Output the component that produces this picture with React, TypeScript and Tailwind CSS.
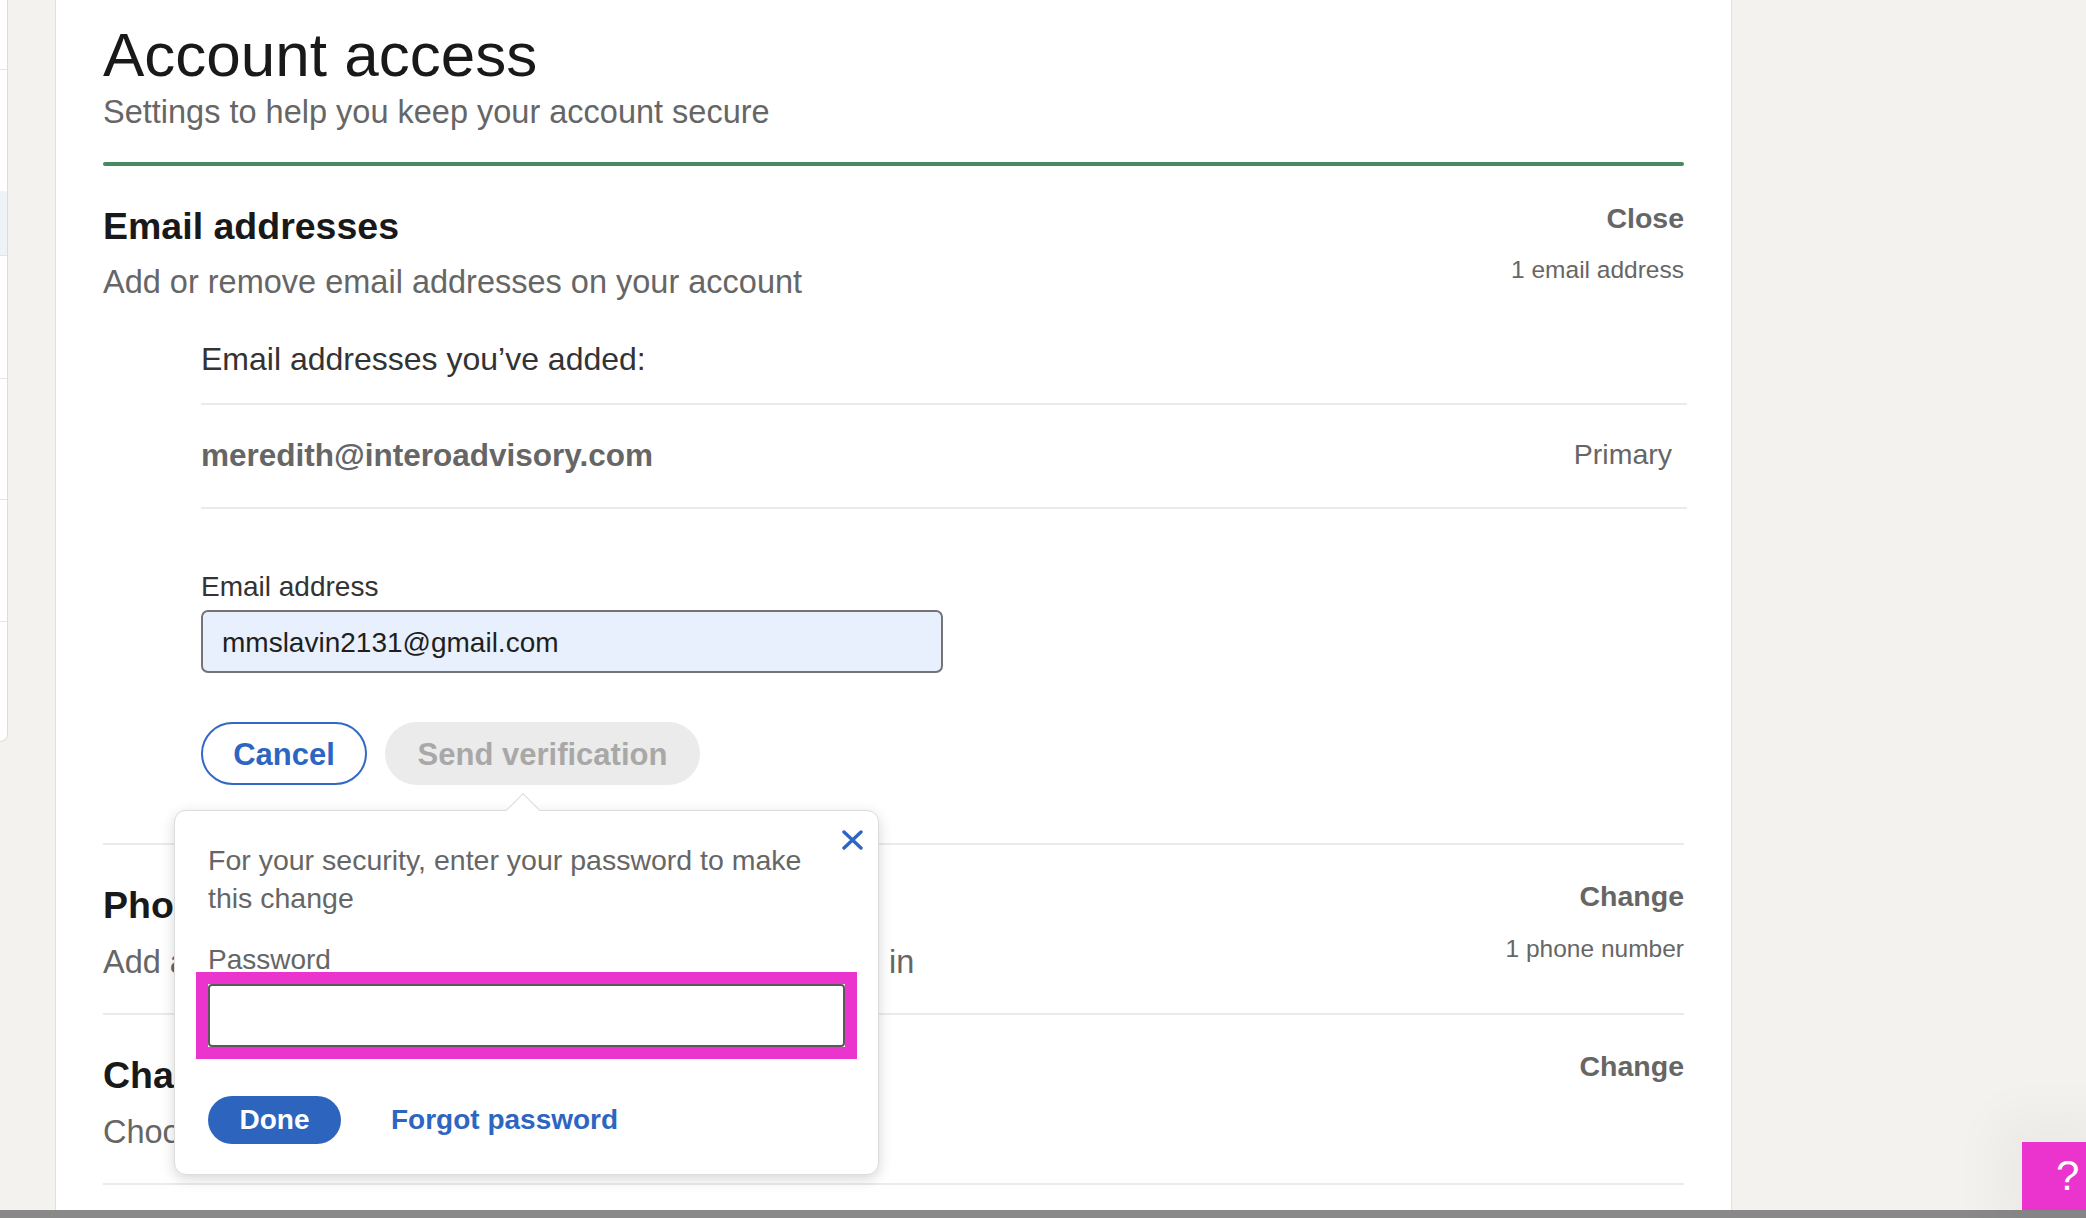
import React from 'react';

const sections = [
  {
    title: 'Phone numbers',
    desc: 'Add a phone number in case you have trouble signing in',
    action: 'Change',
    meta: '1 phone number',
  },
  {
    title: 'Change password',
    desc: 'Choose a unique password to protect your account',
    action: 'Change',
    meta: '',
  },
];

const Sidebar: React.FC = () => (
  <div className="w-[8px] h-[742px] shrink-0 bg-white border-r border-b border-[#dcdcdc] rounded-br-[8px] flex flex-col overflow-hidden">
    <div className="h-[70px] border-b border-[#e4e4e4]" />
    <div className="h-[121px]" />
    <div className="h-[65px] bg-[#eef3f8] border-b border-[#e4e4e4]" />
    <div className="h-[123px] border-b border-[#e4e4e4]" />
    <div className="h-[121px] border-b border-[#e4e4e4]" />
    <div className="h-[122px] border-b border-[#e4e4e4]" />
  </div>
);

const PasswordPopover: React.FC = () => (
  <div className="absolute left-[-27px] top-[88px] z-20 w-[705px] bg-white border border-[#dcdcdc] rounded-[12px] shadow-[0_4px_14px_rgba(0,0,0,0.16)] pt-[30px] px-[33px] pb-[30px]">
    {/* caret */}
    <div className="absolute left-[336px] top-[-13px] w-[24px] h-[24px] bg-white border-l border-t border-[#dcdcdc] rotate-45" />
    <button className="absolute top-[18px] right-[15px] w-[22px] h-[22px] flex items-center justify-center">
      <svg width="21" height="20" viewBox="0 0 21 20" fill="none">
        <path d="M2 2L19 18M19 2L2 18" stroke="#2d66c2" strokeWidth="3.4" strokeLinecap="round" />
      </svg>
    </button>
    <p className="pr-[10px] text-[28.5px] leading-[38px] text-[#666]">
      For your security, enter your password to make this change
    </p>
    <div className="mt-[30px] text-[28px] leading-[26px] text-[#666]">Password</div>
    <div className="mt-[-1px] -mx-[12px] border-[12px] border-[#ea34cd]">
      <input
        type="password"
        className="block w-full h-[63px] rounded-[4px] border-2 border-[#595959] bg-white outline-none"
      />
    </div>
    <div className="mt-[37px] flex items-center gap-[50px]">
      <button className="h-[48px] w-[133px] rounded-full bg-[#2d64bd] text-white text-[28px] font-bold">
        Done
      </button>
      <button className="text-[28px] font-bold text-[#2d66c2]">Forgot password</button>
    </div>
  </div>
);

export default function App() {
  return (
    <div className="relative w-[2086px] h-[1218px] overflow-hidden bg-[#f3f2ef] flex flex-col font-['Liberation_Sans',Arial,sans-serif]">
      <div className="flex-1 min-h-0 flex items-start">
        <Sidebar />
        <main className="ml-[47px] w-[1677px] h-full shrink-0 bg-white border-x border-[#e0dfdc] px-[47px] pt-[20px]">
          <h1 className="text-[62px] leading-[70px] text-[#191919]">Account access</h1>
          <p className="mt-[2px] text-[32.5px] leading-[40px] text-[#666]">
            Settings to help you keep your account secure
          </p>
          <div className="mt-[30px] h-[4px] rounded-full bg-[#478a62]" />

          {/* Email addresses, expanded */}
          <section className="pt-[38px] pb-[58px] border-b-2 border-[#ebebeb]">
            <div className="flex justify-between items-start">
              <div>
                <h2 className="text-[37.5px] leading-[44px] font-bold text-[#191919]">Email addresses</h2>
                <p className="mt-[14px] text-[32.5px] leading-[40px] text-[#666]">
                  Add or remove email addresses on your account
                </p>
              </div>
              <div className="mt-[-3px] text-right">
                <div className="text-[28.5px] leading-[34px] font-bold text-[#666]">Close</div>
                <div className="mt-[20px] text-[24.5px] leading-[30px] text-[#666]">1 email address</div>
              </div>
            </div>

            <div className="pl-[98px] -mr-[3px]">
              <div className="mt-[37px] text-[32px] leading-[40px] text-[#333]">Email addresses you’ve added:</div>
              <div className="mt-[24px] h-[106px] border-y-2 border-[#ebebeb] flex items-center justify-between pr-[15px]">
                <span className="text-[31.5px] font-bold text-[#666]">meredith@interoadvisory.com</span>
                <span className="mb-[4px] text-[28.5px] text-[#666]">Primary</span>
              </div>

              <label className="block mt-[61px] text-[28px] leading-[34px] text-[#333]">Email address</label>
              <input
                readOnly
                value="mmslavin2131@gmail.com"
                className="block mt-[6px] w-[742px] h-[63px] rounded-[7px] border-2 border-[#747474] bg-[#e8f0fe] px-[19px] pt-[3px] text-[28px] text-[#1f1f1f] outline-none"
              />

              <div className="relative mt-[49px] flex gap-[18px]">
                <button className="h-[63px] w-[166px] rounded-full border-2 border-[#3169c4] pt-[3px] text-[31px] font-bold text-[#2d66c2]">
                  Cancel
                </button>
                <button className="h-[63px] w-[315px] rounded-full bg-[#ebebeb] pt-[3px] text-[31px] font-bold text-[#a8a8a8]">
                  Send verification
                </button>
                <PasswordPopover />
              </div>
            </div>
          </section>

          {sections.map((s) => (
            <section key={s.title} className="pt-[38px] pb-[31px] border-b-2 border-[#ebebeb]">
              <div className="flex justify-between items-start">
                <div>
                  <h2 className="text-[37.5px] leading-[44px] font-bold text-[#191919]">{s.title}</h2>
                  <p className="mt-[15px] text-[32.5px] leading-[40px] text-[#666]">{s.desc}</p>
                </div>
                <div className="mt-[-4px] text-right">
                  <div className="text-[28.5px] leading-[34px] font-bold text-[#666]">{s.action}</div>
                  {s.meta && (
                    <div className="mt-[21px] text-[24.5px] leading-[30px] text-[#666]">{s.meta}</div>
                  )}
                </div>
              </div>
            </section>
          ))}
        </main>
      </div>
      <div className="h-[8px] shrink-0 bg-[#898989]" />

      {/* help widget */}
      <div className="absolute right-0 bottom-[8px] w-[64px] h-[68px] bg-[#ea34cd] shadow-[0_0_50px_28px_rgba(0,0,0,0.035)] flex items-center pl-[34px]">
        <span className="text-[42px] leading-none text-white">?</span>
      </div>
    </div>
  );
}
